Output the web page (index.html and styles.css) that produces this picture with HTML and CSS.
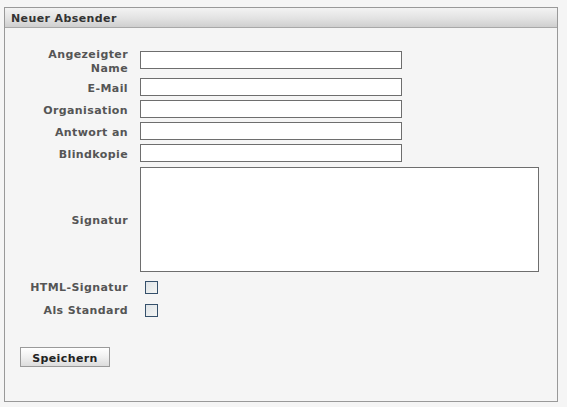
FILE: index.html
```html
<!DOCTYPE html>
<html>
    <head>
        <title>Neuer Absender</title>
        <link rel="stylesheet" href="styles.css">
    </head>
    <body>
        <!--Box for a new sender identity-->
        <div class="IDENTITY_BOX">
            <div class="IDENTITY_HEAD">Neuer Absender</div>

            <form class="IDENTITY_FORM">
                <div class="IDENTITY_ROWS">
                    <label for="name">Angezeigter<br/>Name</label>
                    <input type="text" id="name" name="name">

                    <label for="email">E-Mail</label>
                    <input type="text" id="email" name="email">

                    <label for="organization">Organisation</label>
                    <input type="text" id="organization" name="organization">

                    <label for="reply">Antwort an</label>
                    <input type="text" id="reply" name="reply">

                    <label for="bcc">Blindkopie</label>
                    <input type="text" id="bcc" name="bcc">

                    <label for="signature">Signatur</label>
                    <textarea id="signature" name="signature"></textarea>

                    <label for="html" class="CHECK_LABEL">HTML-Signatur</label>
                    <div class="CHECK_CELL"><input type="checkbox" id="html" name="html"></div>

                    <label for="standard" class="CHECK_LABEL">Als Standard</label>
                    <div class="CHECK_CELL"><input type="checkbox" id="standard" name="standard"></div>
                </div>

                <!--Save button-->
                <div class="IDENTITY_BUTTONS">
                    <input type="submit" value="Speichern">
                </div>
            </form>
        </div>
    </body>
</html>
```

FILE: styles.css
```css
/*Frame gray: #999999*/
/*Label gray: #555555*/
body {
    margin: 0;
    background-color: #f5f5f5;
    font-family: "DejaVu Sans", Verdana, sans-serif;
    font-size: 11px;
    letter-spacing: 0.4px;
}
.IDENTITY_BOX {
    width: 552px;
    height: 393px;
    margin-top: 7px;
    margin-left: 4px;
    border: 1px solid #999999;
    background-color: #f5f5f5;
}
/*Title bar with a soft gray gradient*/
.IDENTITY_HEAD {
    height: 19px;
    line-height: 22px;
    padding-left: 6px;
    border-bottom: 1px solid #a8a8a8;
    background: linear-gradient(#f3f3f3, #e2e2e2 55%, #cfcfcf);
    font-weight: bold;
    color: #333333;
}
.IDENTITY_FORM {
    padding-top: 18px;
}
.IDENTITY_ROWS {
    display: grid;
    grid-template-columns: 123px 1fr;
    column-gap: 12px;
    row-gap: 4px;
    align-items: center;
}
/*Labels sit 2px lower than the field centre*/
.IDENTITY_ROWS label {
    padding-top: 2px;
    margin-bottom: -2px;
    text-align: right;
    line-height: 14px;
    font-weight: bold;
    color: #555555;
}
.IDENTITY_ROWS input[type="text"] {
    box-sizing: border-box;
    width: 262px;
    height: 18px;
    margin: 0;
    padding: 0 3px;
    border: 1px solid #6e6e6e;
    background-color: white;
    font-family: inherit;
    font-size: 11px;
}
.IDENTITY_ROWS textarea {
    box-sizing: border-box;
    width: 399px;
    height: 105px;
    margin: 1px 0 0 0;
    border: 1px solid #6e6e6e;
    background-color: white;
    resize: none;
}
.CHECK_CELL {
    height: 19px;
    display: flex;
    align-items: center;
}
/*Small square checkboxes with dark blue edge*/
.CHECK_CELL input {
    appearance: none;
    box-sizing: border-box;
    width: 13px;
    height: 13px;
    margin: 3px 0 0 5px;
    border: 1px solid #35506b;
    background: linear-gradient(135deg, #dfe4e8, #f4f5f3);
}
.IDENTITY_BUTTONS {
    margin-top: 29px;
    margin-left: 15px;
}
.IDENTITY_BUTTONS input {
    box-sizing: border-box;
    width: 90px;
    height: 20px;
    padding: 2px 0 0 0;
    border: 1px solid #9a9a9a;
    background: linear-gradient(#ffffff, #f0f0f0 50%, #dcdcdc);
    font-family: inherit;
    font-size: 11px;
    letter-spacing: 0.4px;
    font-weight: bold;
    color: #222222;
}
```
